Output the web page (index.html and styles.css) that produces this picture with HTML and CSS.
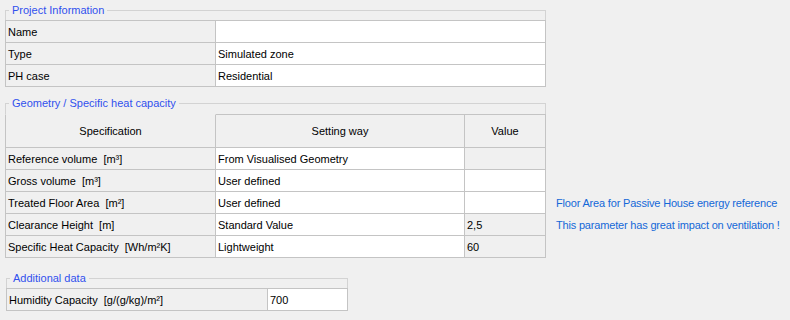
FILE: index.html
```html
<!DOCTYPE html>
<html lang="en">
<head>
    <meta charset="UTF-8">
    <title>Zone Settings</title>
    <link rel="stylesheet" href="styles.css">
</head>
<body>
    <div class="group group-project">
        <div class="group-head"><span class="legend">Project Information</span></div>
        <div class="grid grid-project">
            <div class="cell label">Name</div>
            <div class="cell input"></div>
            <div class="cell label">Type</div>
            <div class="cell input">Simulated zone</div>
            <div class="cell label">PH case</div>
            <div class="cell input">Residential</div>
        </div>
    </div>

    <div class="group group-geometry">
        <div class="group-head head-tall"><span class="legend">Geometry / Specific heat capacity</span></div>
        <div class="grid grid-geometry">
            <div class="cell header first">Specification</div>
            <div class="cell header">Setting way</div>
            <div class="cell header">Value</div>
            <div class="note"></div>

            <div class="cell label">Reference volume&nbsp; [m³]</div>
            <div class="cell input">From Visualised Geometry</div>
            <div class="cell label"></div>
            <div class="note"></div>

            <div class="cell label">Gross volume&nbsp; [m³]</div>
            <div class="cell input">User defined</div>
            <div class="cell input"></div>
            <div class="note"></div>

            <div class="cell label">Treated Floor Area&nbsp; [m²]</div>
            <div class="cell input">User defined</div>
            <div class="cell input"></div>
            <div class="note">Floor Area for Passive House energy reference</div>

            <div class="cell label">Clearance Height&nbsp; [m]</div>
            <div class="cell input">Standard Value</div>
            <div class="cell label">2,5</div>
            <div class="note">This parameter has great impact on ventilation !</div>

            <div class="cell label">Specific Heat Capacity&nbsp; [Wh/m²K]</div>
            <div class="cell input">Lightweight</div>
            <div class="cell label">60</div>
            <div class="note"></div>
        </div>
    </div>

    <div class="group group-additional">
        <div class="group-head"><span class="legend">Additional data</span></div>
        <div class="grid grid-additional">
            <div class="cell label">Humidity Capacity&nbsp; [g/(g/kg)/m²]</div>
            <div class="cell input">700</div>
        </div>
    </div>
</body>
</html>
```

FILE: styles.css
```css
body {
    margin: 0;
    padding: 0;
    background-color: #f0f0f0;
    font-family: "Liberation Sans", Arial, sans-serif;
    font-size: 11px;
    color: #000;
}
.group {
    margin-left: 5px;
}
.group-project {
    margin-top: 10px;
}
.group-geometry {
    margin-top: 16px;
}
.group-additional {
    margin-top: 20px;
    margin-left: 6px;
}
.group-head {
    position: relative;
    width: 539px;
    height: 9px;
    border: 1px solid #d3d3d3;
    border-bottom: none;
}
.head-tall {
    height: 10px;
}
.group-additional .group-head {
    width: 340px;
}
.legend {
    position: absolute;
    top: -7px;
    left: 3px;
    padding: 0 3px;
    line-height: 13px;
    background-color: #f0f0f0;
    color: #3050ee;
}
.grid {
    display: grid;
    border-left: 1px solid #c4c4c4;
}
.grid-project {
    grid-template-columns: 210px 330px;
    width: 540px;
    border-top: 1px solid #c4c4c4;
}
.grid-geometry {
    grid-template-columns: 211px 249px 81px auto;
    border-left: none;
}
.grid-geometry .cell:nth-child(4n+1) {
    border-left: 1px solid #c4c4c4;
}
.grid-additional {
    grid-template-columns: 261px 80px;
    width: 341px;
    border-top: 1px solid #c4c4c4;
}
.cell {
    box-sizing: border-box;
    height: 22px;
    padding: 0 2px;
    display: flex;
    align-items: center;
    white-space: nowrap;
    overflow: hidden;
    border-right: 1px solid #c4c4c4;
    border-bottom: 1px solid #c4c4c4;
}
.label {
    background-color: #f0f0f0;
}
.input {
    background-color: #fff;
}
.header {
    height: 34px;
    justify-content: center;
    border-top: 1px solid #c4c4c4;
    background-color: #f0f0f0;
}
.header.first {
    border-top-color: transparent;
}
.note {
    display: flex;
    align-items: center;
    padding-left: 10px;
    white-space: nowrap;
    letter-spacing: -0.18px;
    color: #1468d8;
}
```
